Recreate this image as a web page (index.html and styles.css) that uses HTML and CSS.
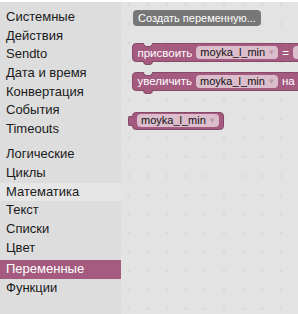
FILE: index.html
```html
<!DOCTYPE html>
<html lang="ru">
<head>
<meta charset="utf-8">
<link rel="stylesheet" href="styles.css">
</head>
<body>
<div class="app">
  <nav class="toolbox">
    <div class="item">Системные</div>
    <div class="item">Действия</div>
    <div class="item">Sendto</div>
    <div class="item">Дата и время</div>
    <div class="item">Конвертация</div>
    <div class="item">События</div>
    <div class="item">Timeouts</div>
    <div class="sep"></div>
    <div class="item">Логические</div>
    <div class="item">Циклы</div>
    <div class="item hover">Математика</div>
    <div class="item">Текст</div>
    <div class="item">Списки</div>
    <div class="item">Цвет</div>
    <div class="sep small"></div>
    <div class="item selected">Переменные</div>
    <div class="item">Функции</div>
  </nav>
  <main class="workspace">
    <div class="create">Создать переменную...</div>
    <div class="block stmt first">
      <span class="label">присвоить</span>
      <span class="field">moyka_l_min<span class="arrow">▾</span></span>
      <span class="label">=</span>
      <span class="field stub"></span>
    </div>
    <div class="block stmt second">
      <span class="label">увеличить</span>
      <span class="field">moyka_l_min<span class="arrow">▾</span></span>
      <span class="label">на</span>
      <span class="field stub"></span>
    </div>
    <div class="block getter">
      <span class="field">moyka_l_min<span class="arrow">▾</span></span>
    </div>
  </main>
</div>
</body>
</html>
```

FILE: styles.css
```css
html, body {
  margin: 0;
  padding: 0;
  background: #ffffff;
}
body {
  font-family: "Liberation Sans", Arial, sans-serif;
  width: 298px;
  height: 314px;
  overflow: hidden;
}
.app {
  display: flex;
  margin-top: 2px;
  height: 312px;
}
.toolbox {
  width: 121px;
  flex: none;
  background: #dddddd;
  padding-top: 6px;
  box-sizing: border-box;
}
.item {
  height: 18.7px;
  line-height: 18.7px;
  padding-left: 6px;
  font-size: 13px;
  color: #1a1a1a;
  white-space: nowrap;
}
.item.hover {
  background: #e6e6e6;
}
.item.selected {
  background: #a55b80;
  color: #ffffff;
}
.sep {
  height: 6.5px;
}
.sep.small {
  height: 3px;
}
.workspace {
  flex: 1;
  background-color: #e3e3e3;
  background-image: radial-gradient(circle, #d2d2d2 0.9px, transparent 1.3px);
  background-size: 19px 19px;
  background-position: -1.5px -6.5px;
  overflow: hidden;
  padding: 8px 0 0 10px;
  box-sizing: border-box;
  display: flex;
  flex-direction: column;
  align-items: flex-start;
}
.create {
  margin-left: 2px;
  height: 16px;
  line-height: 16px;
  padding: 0 5px;
  background: #777777;
  border-radius: 4px;
  color: #ffffff;
  font-size: 11px;
  white-space: nowrap;
}
.block {
  position: relative;
  display: flex;
  align-items: center;
  gap: 4px;
  width: max-content;
  flex: none;
  background: #a55b80;
  border: 1px solid #874a68;
  border-radius: 4px;
  box-sizing: border-box;
  white-space: nowrap;
}
.stmt {
  height: 19px;
  padding: 0 5px;
  margin-left: 0.5px;
}
.stmt.first {
  margin-top: 17px;
}
.stmt.second {
  margin-top: 9.5px;
}
.stmt::before {
  content: "";
  position: absolute;
  left: 10px;
  top: -1px;
  width: 8px;
  height: 3px;
  background: #e3e3e3;
  border: 1px solid #874a68;
  border-top: none;
  border-radius: 0 0 4px 4px;
}
.stmt::after {
  content: "";
  position: absolute;
  left: 10px;
  bottom: -4px;
  width: 8px;
  height: 3px;
  background: #a55b80;
  border: 1px solid #874a68;
  border-top: none;
  border-radius: 0 0 4px 4px;
}
.label {
  color: #ffffff;
  font-size: 11.5px;
}
.field {
  display: inline-flex;
  align-items: center;
  height: 13px;
  line-height: 13px;
  padding: 0 4px;
  border-radius: 4px;
  background: #dcbdcc;
  color: #111111;
  font-size: 11px;
}
.field.stub {
  width: 20px;
  padding: 0;
}
.arrow {
  margin-left: 4px;
  color: #b89aa9;
  font-size: 9px;
}
.getter {
  margin-top: 21px;
  margin-left: 1px;
  height: 18px;
  padding: 0 4px 0 4px;
}
.getter::before {
  content: "";
  position: absolute;
  left: -5px;
  top: 3px;
  width: 4px;
  height: 8px;
  background: #a55b80;
  border: 1px solid #874a68;
  border-right: none;
  border-radius: 2px 0 0 2px;
}
```
